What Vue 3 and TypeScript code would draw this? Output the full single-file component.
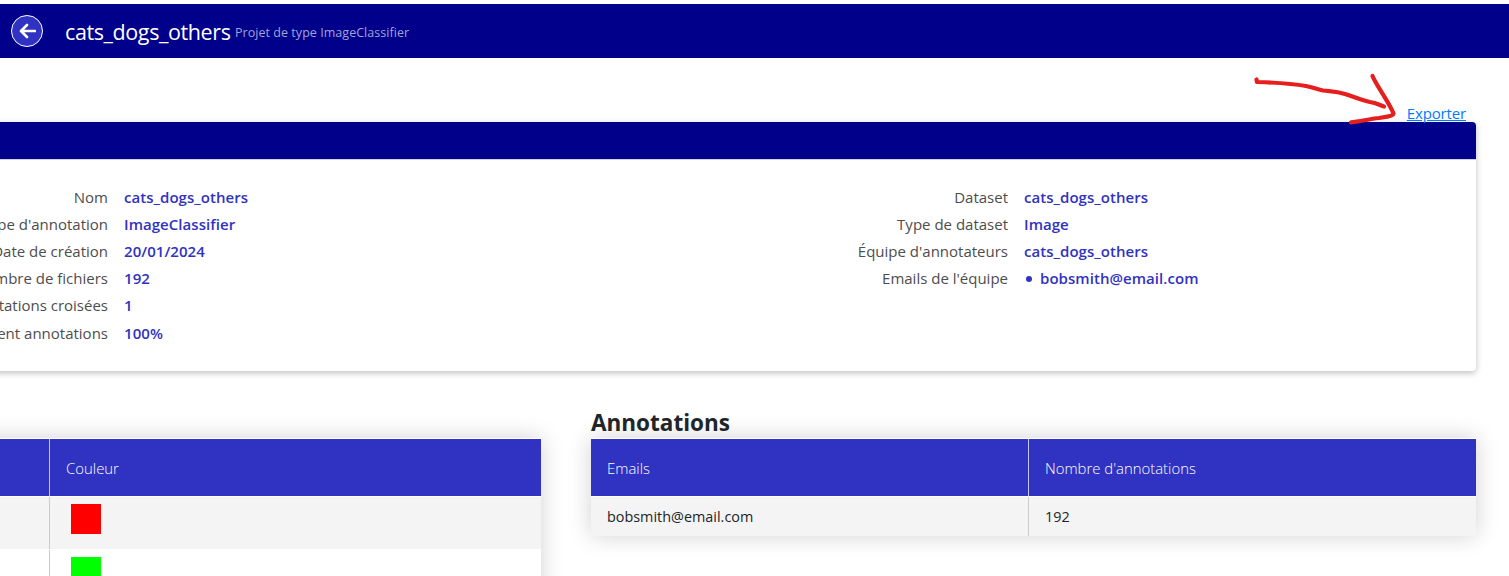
<script setup lang="ts">
interface Field {
  label: string
  value: string
  bullet?: boolean
}

const projectFields: Field[] = [
  { label: 'Nom', value: 'cats_dogs_others' },
  { label: "Type d'annotation", value: 'ImageClassifier' },
  { label: 'Date de création', value: '20/01/2024' },
  { label: 'Nombre de fichiers', value: '192' },
  { label: 'Annotations croisées', value: '1' },
  { label: 'Avancement annotations', value: '100%' },
]

const datasetFields: Field[] = [
  { label: 'Dataset', value: 'cats_dogs_others' },
  { label: 'Type de dataset', value: 'Image' },
  { label: "Équipe d'annotateurs", value: 'cats_dogs_others' },
  { label: "Emails de l'équipe", value: 'bobsmith@email.com', bullet: true },
]

const labelColors: string[] = ['#ff0000', '#00ff00']
</script>

<template>
  <div class="page">
    <header class="topbar">
      <button class="back" aria-label="Retour">
        <svg width="18" height="16" viewBox="0 0 18 16">
          <path d="M17 8H3.200M9 2L3 8l6 6" />
        </svg>
      </button>
      <h1 class="title">cats_dogs_others</h1>
      <span class="subtitle">Projet de type ImageClassifier</span>
    </header>

    <main class="content">
      <div class="actions"><a class="export">Exporter</a></div>

      <section class="card">
        <div class="card-head"></div>
        <div class="card-body">
          <dl v-for="(fields, i) in [projectFields, datasetFields]" :key="i" class="fields">
            <div v-for="f in fields" :key="f.label" class="field">
              <dt>{{ f.label }}</dt>
              <dd :class="{ bullet: f.bullet }">{{ f.value }}</dd>
            </div>
          </dl>
        </div>
      </section>

      <div class="tables">
        <section class="labels-section">
          <div class="table labels">
            <div class="row head"><div class="cell"></div><div class="cell">Couleur</div></div>
            <div v-for="c in labelColors" :key="c" class="row tall">
              <div class="cell"></div>
              <div class="cell"><span class="swatch" :style="{ background: c }"></span></div>
            </div>
          </div>
        </section>
        <section>
          <h2 class="heading">Annotations</h2>
          <div class="table">
            <div class="row head"><div class="cell">Emails</div><div class="cell">Nombre d'annotations</div></div>
            <div class="row"><div class="cell">bobsmith@email.com</div><div class="cell">192</div></div>
          </div>
        </section>
      </div>
    </main>

    <svg class="arrow" width="150" height="60" viewBox="1250 70 150 60">
      <path d="M1256.500 79.500L1257 82C1274 82.500 1292 83.500 1306 86C1313 87.500 1318 89.500 1323 90.500C1332 91.500 1336 91 1345 94C1356 97.500 1361 100 1370 102C1377 103 1379 105 1384 106.500" />
      <path d="M1372.500 76C1376 85 1389 102 1393.500 113.500C1393 116 1387 117 1379 118C1369 119 1360 121.500 1351 122.300" />
    </svg>
  </div>
</template>

<style>
html,
body {
  margin: 0;
  overflow: hidden;
  background: #fff;
}
</style>

<style scoped>
.page {
  position: relative;
  height: 576px;
  overflow: hidden;
  font-family: 'Open Sans', 'Noto Sans', sans-serif;
  font-size: 15px;
  color: #212529;
}
.topbar {
  display: flex;
  align-items: center;
  height: 54px;
  margin-top: 4px;
  padding-left: 11px;
  background: #00008b;
  white-space: nowrap;
}
.back {
  display: flex;
  align-items: center;
  justify-content: center;
  box-sizing: border-box;
  width: 32px;
  height: 32px;
  padding: 0;
  border: 1px solid #fff;
  border-radius: 50%;
  background: #3032c1;
}
.back path {
  fill: none;
  stroke: #fff;
  stroke-width: 2.6;
  stroke-linecap: round;
  stroke-linejoin: round;
}
.title {
  width: 170px;
  margin: 0 0 0 22px;
  font-size: 21.5px;
  font-weight: 400;
  letter-spacing: -0.4px;
  color: #fff;
}
.subtitle {
  padding-top: 2px;
  font-size: 12.5px;
  letter-spacing: 0.04px;
  color: #a3a3d6;
}
.content {
  width: 1820px;
  margin-left: -344px;
}
.actions {
  display: flex;
  justify-content: flex-end;
  align-items: flex-end;
  height: 64px;
  padding-right: 10px;
}
.export {
  line-height: 18px;
  letter-spacing: -0.15px;
  color: #007bff;
  text-decoration: underline;
}
.card {
  height: 249px;
  border-radius: 4px;
  background: #fff;
  box-shadow: 0 2px 6px rgba(0, 0, 0, 0.26);
}
.card-head {
  height: 37px;
  border-bottom: 1px solid #cfcfe2;
  border-radius: 4px 4px 0 0;
  background: #00008b;
  background-clip: padding-box;
}
.card-body {
  display: flex;
  padding: 24px 0 0 2px;
}
.fields {
  width: 900px;
  margin: 0;
}
.field {
  display: flex;
  height: 27px;
  line-height: 27px;
}
.field:nth-child(6) {
  margin-top: 1px;
}
dt {
  width: 450px;
  text-align: right;
  color: #4d4d4d;
}
dd {
  margin: 0 0 0 16px;
  font-weight: 600;
  letter-spacing: 0.05px;
  color: #3032c1;
}
.bullet {
  display: flex;
  align-items: center;
}
.bullet::before {
  content: '';
  width: 6px;
  height: 6px;
  margin: 1px 8px 0 2px;
  border-radius: 50%;
  background: #3032c1;
}
.tables {
  display: grid;
  grid-template-columns: 885px 885px;
  gap: 50px;
  margin-top: 36px;
}
.labels-section {
  padding-top: 31px;
}
.heading {
  height: 31px;
  margin: 0;
  font-size: 22.5px;
  line-height: 31px;
  font-weight: 700;
}
.table {
  border-top: 1px solid #fff;
  box-shadow: 0 0 22px rgba(0, 0, 0, 0.18);
}
.row {
  display: grid;
  grid-template-columns: 438px 1fr;
  height: 39px;
  background: #f4f4f4;
  font-size: 14.4px;
}
.labels .row {
  grid-template-columns: 394px 1fr;
}
.labels .row:nth-child(odd) {
  background: #fff;
}
.row.head,
.labels .row.head {
  height: 57px;
  border-bottom: 1px solid #fff;
  background: #3032c1;
  background-clip: padding-box;
  color: #fff;
  font-size: 14.9px;
  font-weight: 300;
}
.row.tall {
  height: 52px;
  border-bottom: 1px solid #fff;
}
.cell {
  display: flex;
  align-items: center;
  box-sizing: border-box;
  padding-left: 16px;
}
.cell:first-child {
  border-right: 1px solid #cbcbcb;
}
.head .cell:first-child {
  border-color: #c4c4ed;
}
.tall .cell {
  align-items: flex-start;
}
.swatch {
  width: 30px;
  height: 30px;
  margin: 7px 0 0 5px;
}
.arrow {
  position: absolute;
  left: 1250px;
  top: 70px;
  fill: none;
  stroke: #e61e1e;
  stroke-width: 4.2;
  stroke-linecap: round;
  stroke-linejoin: round;
}
</style>
